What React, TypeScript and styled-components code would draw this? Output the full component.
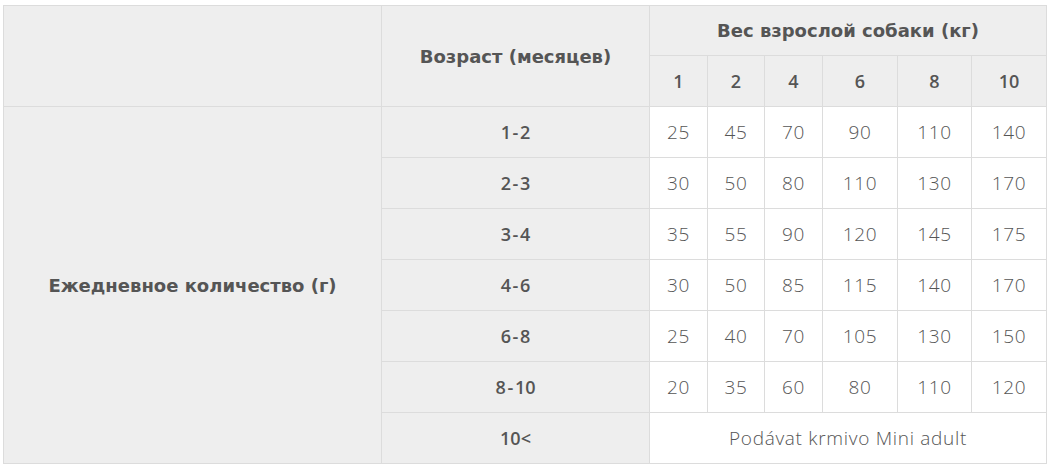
import React from 'react';
import styled, { createGlobalStyle } from 'styled-components';

const GlobalStyle = createGlobalStyle`
    html, body {
        margin: 0;
        padding: 0;
        background: #fff;
    }
    body {
        padding: 5px 0 0 3px;
        font-family: "Open Sans", "Noto Sans", sans-serif;
        color: #555;
    }
`

const weights = ['1', '2', '4', '6', '8', '10']

const rows: { age: string; values: number[] }[] = [
    { age: '1-2', values: [25, 45, 70, 90, 110, 140] },
    { age: '2-3', values: [30, 50, 80, 110, 130, 170] },
    { age: '3-4', values: [35, 55, 90, 120, 145, 175] },
    { age: '4-6', values: [30, 50, 85, 115, 140, 170] },
    { age: '6-8', values: [25, 40, 70, 105, 130, 150] },
    { age: '8-10', values: [20, 35, 60, 80, 110, 120] },
]

const colWidths = [378, 268, 58, 57, 58, 75, 74, 75]

function App() {
    return (
        <>
            <GlobalStyle />
            <Table>
                <colgroup>
                    {colWidths.map((w, i) => <col key={i} style={{ width: w }} />)}
                </colgroup>
                <thead>
                    <tr>
                        <HeadCell rowSpan={2} $h={50}></HeadCell>
                        <HeadCell rowSpan={2} $text>Возраст (месяцев)</HeadCell>
                        <HeadCell colSpan={6} $h={50} $text>Вес взрослой собаки (кг)</HeadCell>
                    </tr>
                    <tr>
                        {weights.map(w => <HeadCell key={w} $h={51}>{w}</HeadCell>)}
                    </tr>
                </thead>
                <tbody>
                    {rows.map((r, i) => (
                        <tr key={r.age}>
                            {i === 0 && <HeadCell rowSpan={7} $text>Ежедневное количество (г)</HeadCell>}
                            <HeadCell $h={51}>{r.age.replace('-', ' - ')}</HeadCell>
                            {r.values.map((v, j) => <DataCell key={j}>{v}</DataCell>)}
                        </tr>
                    ))}
                    <tr>
                        <HeadCell $h={51}>10&lt;</HeadCell>
                        <DataCell colSpan={6}>Podávat krmivo Mini adult</DataCell>
                    </tr>
                </tbody>
            </Table>
        </>
    );
}

const Table = styled.table`
    border-collapse: collapse;
    table-layout: fixed;
    width: 1044px;
    border: 1px solid #dcdcdc;
`

const HeadCell = styled.td<{ $h?: number; $text?: boolean }>`
    background: #eeeeee;
    border: 1px solid #dcdcdc;
    height: ${p => (p.$h ? `${p.$h - 1}px` : 'auto')};
    padding: 0;
    text-align: center;
    vertical-align: middle;
    font-family: ${p => (p.$text ? '"DejaVu Sans", Verdana, sans-serif' : '"Open Sans", sans-serif')};
    font-size: 18px;
    font-weight: ${p => (p.$text ? 700 : 600)};
    word-spacing: ${p => (p.$text ? '0' : '-3px')};
    color: #555;
`

const DataCell = styled.td`
    background: #fff;
    border: 1px solid #dcdcdc;
    padding: 0;
    text-align: center;
    vertical-align: middle;
    font-size: 19px;
    font-weight: 300;
    letter-spacing: 0.7px;
    color: #555;
`

export default App;
